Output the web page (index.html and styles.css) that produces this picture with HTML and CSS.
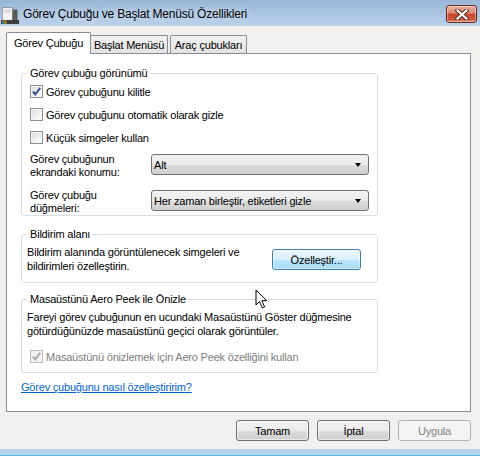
FILE: index.html
```html
<!DOCTYPE html>
<html lang="tr">
<head>
<meta charset="utf-8">
<title>Görev Çubuğu ve Başlat Menüsü Özellikleri</title>
<link rel="stylesheet" href="styles.css">
</head>
<body>
<div class="window">
  <div class="titlebar">
    <svg class="appicon" width="18" height="18" viewBox="0 0 18 18">
      <rect x="1.5" y="1.5" width="10" height="13" fill="#f4f4f4" stroke="#9a9a9a"/>
      <rect x="3" y="3" width="7" height="4" fill="#dcdcdc"/>
      <rect x="11.5" y="3.5" width="5" height="11" fill="#5a5a5a"/>
      <rect x="0" y="14" width="18" height="4" fill="#3d3d3d"/>
      <rect x="1" y="14.5" width="2" height="1.4" fill="#f25022"/>
      <rect x="3.4" y="14.5" width="2" height="1.4" fill="#7fba00"/>
      <rect x="1" y="16.2" width="2" height="1.4" fill="#00a4ef"/>
      <rect x="3.4" y="16.2" width="2" height="1.4" fill="#ffb900"/>
    </svg>
    <span class="title">Görev Çubuğu ve Başlat Menüsü Özellikleri</span>
    <div class="close">
      <svg width="14" height="11" viewBox="0 0 14 11">
        <path d="M2.5 1.5 L11.5 9.5 M11.5 1.5 L2.5 9.5" stroke="#5a2a22" stroke-width="4.2" stroke-linecap="square"/>
        <path d="M2.5 1.5 L11.5 9.5 M11.5 1.5 L2.5 9.5" stroke="#ffffff" stroke-width="2.2" stroke-linecap="square"/>
      </svg>
    </div>
  </div>

  <div class="body">
    <div class="tabs">
      <div class="tab active">Görev Çubuğu</div>
      <div class="tab t2">Başlat Menüsü</div>
      <div class="tab t3">Araç çubukları</div>
    </div>

    <div class="panel">
      <fieldset class="group g1">
        <legend>Görev çubuğu görünümü</legend>
        <div class="inner">
          <div class="check"><span class="box"><svg width="11" height="11" viewBox="0 0 11 11"><path d="M2 5.5 L4.3 8.3 L9.2 1.8" fill="none" stroke="#3a4f8f" stroke-width="2"/></svg></span>Görev çubuğunu kilitle</div>
          <div class="check"><span class="box"></span>Görev çubuğunu otomatik olarak gizle</div>
          <div class="check"><span class="box"></span>Küçük simgeler kullan</div>
          <div class="field f1">
            <div class="flabel">Görev çubuğunun<br>ekrandaki konumu:</div>
            <div class="select">Alt<span class="arrow"></span></div>
          </div>
          <div class="field f2">
            <div class="flabel">Görev çubuğu<br>düğmeleri:</div>
            <div class="select">Her zaman birleştir, etiketleri gizle<span class="arrow"></span></div>
          </div>
        </div>
      </fieldset>

      <fieldset class="group g2">
        <legend>Bildirim alanı</legend>
        <div class="row">
          <p class="text">Bildirim alanında görüntülenecek simgeleri ve<br>bildirimleri özelleştirin.</p>
          <div class="btn default">Özelleştir...</div>
        </div>
      </fieldset>

      <fieldset class="group g3">
        <legend>Masaüstünü Aero Peek ile Önizle</legend>
        <p class="text">Fareyi görev çubuğunun en ucundaki Masaüstünü Göster düğmesine<br>götürdüğünüzde masaüstünü geçici olarak görüntüler.</p>
        <div class="check disabled"><span class="box"><svg width="11" height="11" viewBox="0 0 11 11"><path d="M2 5.5 L4.3 8.3 L9.2 1.8" fill="none" stroke="#a9a9a9" stroke-width="2"/></svg></span>Masaüstünü önizlemek için Aero Peek özelliğini kullan</div>
      </fieldset>

      <a class="link" href="#">Görev çubuğunu nasıl özelleştiririm?</a>
    </div>

    <div class="buttons">
      <div class="btn">Tamam</div>
      <div class="btn">İptal</div>
      <div class="btn disabled">Uygula</div>
    </div>
  </div>

  <div class="frame-bottom"></div>

  <svg class="cursor" width="14" height="21" viewBox="0 0 14 21">
    <path d="M1 1 L1 16 L4.5 12.6 L7.3 19 L9.6 18 L6.9 11.7 L11.6 11.7 Z" fill="#ffffff" stroke="#000000" stroke-width="1" stroke-linejoin="miter"/>
  </svg>
</div>
</body>
</html>
```
FILE: styles.css
```css
html, body {
  margin: 0;
  padding: 0;
}

body {
  width: 480px;
  height: 456px;
  overflow: hidden;
  font-family: "Liberation Sans", Arial, sans-serif;
  font-size: 11px;
  letter-spacing: -0.2px;
  color: #000;
  background: #f0f0ee;
}

.window {
  position: relative;
  width: 480px;
  height: 456px;
  display: flex;
  flex-direction: column;
  background: #f0f0ee;
}

/* Title bar */
.titlebar {
  flex: none;
  height: 26px;
  display: flex;
  align-items: center;
  background: linear-gradient(#99b6d7, #bad2ec);
}

.appicon {
  flex: none;
  margin-left: 1px;
  margin-right: 4px;
  margin-top: 3px;
}

.title {
  font-size: 12px;
  letter-spacing: -0.2px;
  color: #000;
  text-shadow: 0 0 6px rgba(255, 255, 255, 0.8);
  flex: 1;
  margin-top: 1px;
}

.close {
  flex: none;
  width: 31px;
  height: 18px;
  box-sizing: border-box;
  margin-right: 3px;
  margin-top: 2px;
  border: 1px solid #6b2b22;
  border-radius: 3px;
  background: linear-gradient(#eab1a3 0%, #dc8a75 45%, #c7472e 50%, #cc5a3f 85%, #e0917c 100%);
  box-shadow: inset 0 0 0 1px rgba(255, 255, 255, 0.35);
  display: flex;
  align-items: center;
  justify-content: center;
}

/* Dialog body */
.body {
  flex: 1;
  display: flex;
  flex-direction: column;
  padding: 6px 9px 0 6px;
}

.tabs {
  display: flex;
  align-items: flex-end;
  height: 21px;
}

.tab {
  box-sizing: border-box;
  height: 18px;
  border: 1px solid #898c95;
  border-bottom: none;
  border-radius: 2px 2px 0 0;
  background: linear-gradient(#f2f2f2, #e3e3e3);
  display: flex;
  align-items: center;
  justify-content: center;
  padding-top: 1px;
}

.tab.active {
  position: relative;
  z-index: 1;
  width: 85px;
  height: 22px;
  margin-bottom: -1px;
  background: #fff;
  padding-top: 0;
  padding-bottom: 1px;
}

.tab.t2 {
  width: 78px;
  margin-left: -1px;
}

.tab.t3 {
  width: 77px;
  margin-left: 2px;
}

.panel {
  box-sizing: border-box;
  width: 465px;
  height: 359px;
  border: 1px solid #898c95;
  background: #fff;
  padding: 12px 0 0 14px;
  display: flex;
  flex-direction: column;
  align-items: flex-start;
}

/* Group boxes */
.group {
  box-sizing: border-box;
  width: 357px;
  margin: 0;
  padding: 0 0 0 5px;
  border: 1px solid #d5dfe5;
  border-radius: 3px;
  min-inline-size: 0;
}

.group legend {
  padding: 0 2px 0 3px;
  line-height: 14px;
  height: 14px;
}

.g1 .inner {
  padding-left: 3px;
}

.check {
  height: 23px;
  display: flex;
  align-items: center;
  line-height: 14px;
}

.box {
  box-sizing: border-box;
  width: 13px;
  height: 13px;
  margin-right: 3px;
  border: 1px solid #8e8f8f;
  background: linear-gradient(135deg, #d8dadd 0%, #f1f2f3 60%, #ffffff 100%);
  box-shadow: inset 0 0 0 1px #f4f4f4;
  display: flex;
  align-items: center;
  justify-content: center;
  flex: none;
}

.check.disabled {
  color: #7d7d7d;
}

.check.disabled .box {
  border-color: #bcbcbc;
  background: #f4f4f4;
}

.field {
  display: flex;
  align-items: flex-start;
}

.field.f1 {
  margin-top: 4px;
}

.field.f2 {
  margin-top: 10px;
}

.flabel {
  width: 121px;
  line-height: 13px;
  height: 26px;
}

.select {
  box-sizing: border-box;
  width: 218px;
  height: 21px;
  margin-top: 1px;
  border: 1px solid #707070;
  border-radius: 3px;
  background: linear-gradient(#f2f2f2 0%, #ebebeb 50%, #dddddd 51%, #cfcfcf 100%);
  display: flex;
  align-items: center;
  padding-left: 2px;
  position: relative;
}

.arrow {
  position: absolute;
  right: 7px;
  top: 8px;
  width: 0;
  height: 0;
  border-left: 3.5px solid transparent;
  border-right: 3.5px solid transparent;
  border-top: 4px solid #000;
}

.g2 {
  margin-top: 11px;
  padding-bottom: 9px;
  padding-right: 16px;
}

.g2 .row {
  display: flex;
  align-items: flex-start;
  justify-content: space-between;
}

.text {
  margin: 0;
  padding-top: 4px;
  line-height: 14px;
}

.g3 .text {
  line-height: 14px;
}

.btn {
  box-sizing: border-box;
  width: 73px;
  height: 21px;
  border: 1px solid #707070;
  border-radius: 3px;
  background: linear-gradient(#f2f2f2 0%, #ebebeb 50%, #dddddd 51%, #cfcfcf 100%);
  box-shadow: inset 0 0 0 1px rgba(255, 255, 255, 0.6);
  display: flex;
  align-items: center;
  justify-content: center;
}

.btn.default {
  width: 89px;
  margin-top: 8px;
  border-color: #3c7fb1;
  background: linear-gradient(#eaf6fd 0%, #d9f0fc 50%, #bee6fd 51%, #a7d9f5 100%);
  box-shadow: inset 0 0 0 1px rgba(255, 255, 255, 0.5);
}

.btn.disabled {
  border-color: #adb2b5;
  background: #f4f4f4;
  box-shadow: none;
  color: #838383;
}

.g3 {
  margin-top: 9px;
  padding-bottom: 4px;
}

.g3 .check {
  margin-top: 7px;
  margin-left: 3px;
}

.link {
  margin-top: 7px;
  line-height: 14px;
  color: #0066cc;
  text-decoration: underline;
}

.buttons {
  display: flex;
  justify-content: flex-end;
  gap: 8px;
  margin-top: 8px;
  padding-right: 0;
}

.frame-bottom {
  flex: none;
  height: 7px;
  background: linear-gradient(#b9d3ec 0 6px, #4dbbe6 6px 7px);
}

.cursor {
  position: absolute;
  left: 255px;
  top: 289px;
}
```
